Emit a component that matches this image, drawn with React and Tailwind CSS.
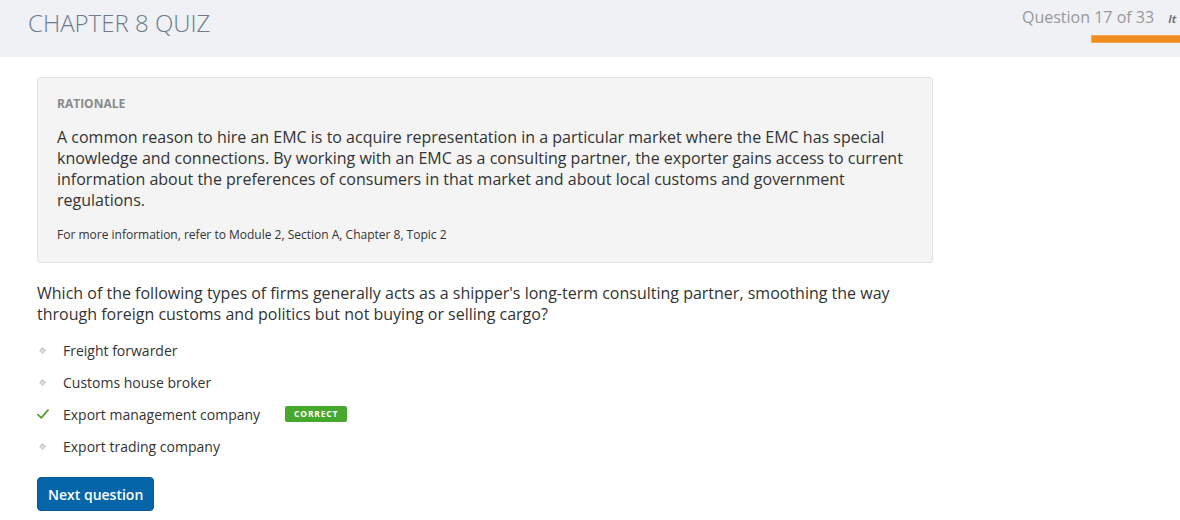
import React from 'react';

const options = [
  { label: 'Freight forwarder', correct: false },
  { label: 'Customs house broker', correct: false },
  { label: 'Export management company', correct: true },
  { label: 'Export trading company', correct: false },
];

function Bullet() {
  return (
    <svg width="7" height="7" viewBox="0 0 7 7" className="block">
      <path d="M3.5 0 L7 3.5 L3.5 7 L0 3.5 Z" fill="#c9c9c9" />
      <rect x="2.5" y="2.5" width="2" height="2" fill="#e8e8e8" />
    </svg>
  );
}

function Check() {
  return (
    <svg width="12" height="10" viewBox="0 0 12 10" className="block">
      <path d="M1 5.6 L4.3 8.8 L11 1.2" fill="none" stroke="#5a9e2f" strokeWidth="1.8" strokeLinecap="round" strokeLinejoin="round" />
    </svg>
  );
}

export default function App() {
  return (
    <div className="min-h-[520px] bg-white text-[#333] font-['Open_Sans',sans-serif]">
      <header className="h-[57px] bg-[#eff1f5] flex overflow-hidden">
        <div className="flex-1 pl-[28px] pt-[5px]">
          <h1 className="text-[24px] font-light text-[#6e7b8b] leading-[36px]">
            CHAPTER 8 QUIZ
          </h1>
        </div>
        <div className="w-[158px] shrink-0 pt-[5px]">
          <div className="flex items-baseline whitespace-nowrap">
            <span className="text-[16px] text-[#999] leading-[24px]">Question 17 of 33</span>
            <span className="ml-[14px] text-[11px] font-bold italic text-[#777]">It</span>
          </div>
          <div className="mt-[6px] ml-[69px] h-[8px] w-[120px] bg-[#f08d1f] border border-[#f5a54e]" />
        </div>
      </header>

      <main className="pl-[37px] w-[933px]">
        <div className="mt-[20px] bg-[#f4f4f4] border border-[#e2e2e2] rounded-[3px] pt-[17px] pb-[18px] px-[19px]">
          <div className="text-[12px] font-bold text-[#8a8a8a] leading-[18px]">RATIONALE</div>
          <p className="mt-[14px] text-[16px] leading-[21px] text-[#333]">
            A common reason to hire an EMC is to acquire representation in a particular market where the EMC has special knowledge and connections. By working with an EMC as a consulting partner, the exporter gains access to current information about the preferences of consumers in that market and about local customs and government regulations.
          </p>
          <p className="mt-[15px] text-[12px] leading-[18px] text-[#333]">
            For more information, refer to Module 2, Section A, Chapter 8, Topic 2
          </p>
        </div>

        <p className="mt-[20px] text-[16px] leading-[21px] text-[#333] pr-[30px]">
          Which of the following types of firms generally acts as a shipper's long-term consulting partner, smoothing the way through foreign customs and politics but not buying or selling cargo?
        </p>

        <ul className="mt-[9px] flex flex-col">
          {options.map((o) => (
            <li key={o.label} className="h-[32px] flex items-center text-[14px] text-[#333]">
              <span className="w-[26px] flex justify-start">
                {o.correct ? <Check /> : <span className="pl-[2px]"><Bullet /></span>}
              </span>
              <span>{o.label}</span>
              {o.correct && (
                <span className="ml-[25px] h-[16px] px-[9px] flex items-center rounded-[2px] bg-[#46a82c] text-white text-[8.5px] font-bold tracking-[0.8px]">
                  CORRECT
                </span>
              )}
            </li>
          ))}
        </ul>

        <button className="mt-[15px] h-[34px] px-[10px] rounded-[4px] bg-[#0465a9] border border-[#045a97] text-white text-[14px] font-semibold">
          Next question
        </button>
      </main>
    </div>
  );
}
